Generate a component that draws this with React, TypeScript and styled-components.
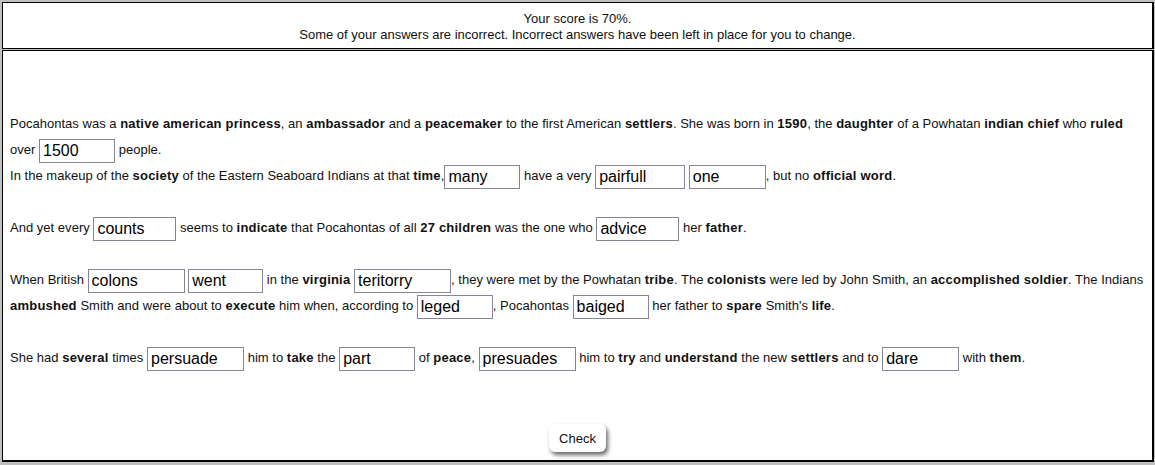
import React from "react";
import styled, { createGlobalStyle } from "styled-components";

const Global = createGlobalStyle`
  html, body {
    margin: 0;
    padding: 0;
    background: #c0c0c0;
  }
  body {
    font-family: "Liberation Sans", Arial, sans-serif;
    color: #111;
  }
`;

const Page = styled.div`
  width: 1155px;
  height: 465px;
  box-sizing: border-box;
  padding: 2px 1px 0 2px;
  display: flex;
  flex-direction: column;
  gap: 1px;
`;

const ScoreBox = styled.div`
  box-sizing: border-box;
  height: 47px;
  border: 1px solid #000;
  border-right-width: 2px;
  background: #fff;
  padding: 8px 0 0;
  text-align: center;
  font-size: 13px;
  line-height: 16px;
`;

const ScoreLine = styled.div``;

const Exercise = styled.div`
  box-sizing: border-box;
  height: 412px;
  border: 1px solid #000;
  border-right-width: 2px;
  border-bottom-width: 2px;
  background: #fff;
  padding: 60px 7px 0 7px;
  display: flex;
  flex-direction: column;
`;

const Passage = styled.div`
  font-size: 13px;
  line-height: 26px;
  letter-spacing: 0.02px;
`;

const Strong = styled.b`
  font-weight: bold;
  letter-spacing: 0.22px;
`;

const Gap = styled.input<{ $w: number }>`
  box-sizing: border-box;
  width: ${(p) => p.$w}px;
  height: 24px;
  margin: 0;
  padding: 0 3px;
  border: 1px solid #858597;
  border-radius: 0;
  background: #fff;
  font-family: "Liberation Sans", Arial, sans-serif;
  font-size: 16px;
  color: #000;
  vertical-align: middle;
  outline: none;
`;

const CheckRow = styled.div`
  margin-top: 53px;
  display: flex;
  justify-content: center;
`;

const CheckButton = styled.button`
  box-sizing: border-box;
  width: 57px;
  height: 28px;
  padding: 0;
  border: none;
  border-radius: 6px;
  background: #fff;
  box-shadow: 2px 3px 4px rgba(0, 0, 0, 0.6);
  font-family: "Liberation Sans", Arial, sans-serif;
  font-size: 13px;
  color: #111;
  cursor: pointer;
`;

const G = ({ v, w }: { v: string; w: number }) => (
  <Gap $w={w} defaultValue={v} />
);

const B = Strong;

export default function App() {
  return (
    <>
      <Global />
      <Page>
        <ScoreBox>
          <ScoreLine>Your score is 70%.</ScoreLine>
          <ScoreLine>
            Some of your answers are incorrect. Incorrect answers have been left
            in place for you to change.
          </ScoreLine>
        </ScoreBox>
        <Exercise>
          <Passage>
            Pocahontas was a <B>native american princess</B>, an{" "}
            <B>ambassador</B> and a <B>peacemaker</B> to the first American{" "}
            <B>settlers</B>. She was born in <B>1590</B>, the <B>daughter</B> of
            a Powhatan <B>indian chief</B> who <B>ruled</B> over{" "}
            <G v="1500" w={76} /> people.
            <br />
            In the makeup of the <B>society</B> of the Eastern Seaboard Indians
            at that <B>time</B>,<G v="many" w={76} /> have a very{" "}
            <G v="pairfull" w={90} /> <G v="one" w={77} />, but no{" "}
            <B>official word</B>.
            <br />
            <br />
            And yet every <G v="counts" w={83} /> seems to <B>indicate</B> that
            Pocahontas of all <B>27 children</B> was the one who{" "}
            <G v="advice" w={83} /> her <B>father</B>.
            <br />
            <br />
            When British <G v="colons" w={97} /> <G v="went" w={75} /> in the{" "}
            <B>virginia</B> <G v="teritorry" w={97} />, they were met by the
            Powhatan <B>tribe</B>. The <B>colonists</B> were led by John Smith,
            an <B>accomplished soldier</B>. The Indians <B>ambushed</B> Smith
            and were about to <B>execute</B> him when, according to{" "}
            <G v="leged" w={76} />, Pocahontas <G v="baiged" w={76} /> her
            father to <B>spare</B> Smith's <B>life</B>.
            <br />
            <br />
            She had <B>several</B> times <G v="persuade" w={97} /> him to{" "}
            <B>take</B> the <G v="part" w={76} /> of <B>peace</B>,{" "}
            <G v="presuades" w={97} /> him to <B>try</B> and{" "}
            <B>understand</B> the new <B>settlers</B> and to{" "}
            <G v="dare" w={77} /> with <B>them</B>.
          </Passage>
          <CheckRow>
            <CheckButton>Check</CheckButton>
          </CheckRow>
        </Exercise>
      </Page>
    </>
  );
}
